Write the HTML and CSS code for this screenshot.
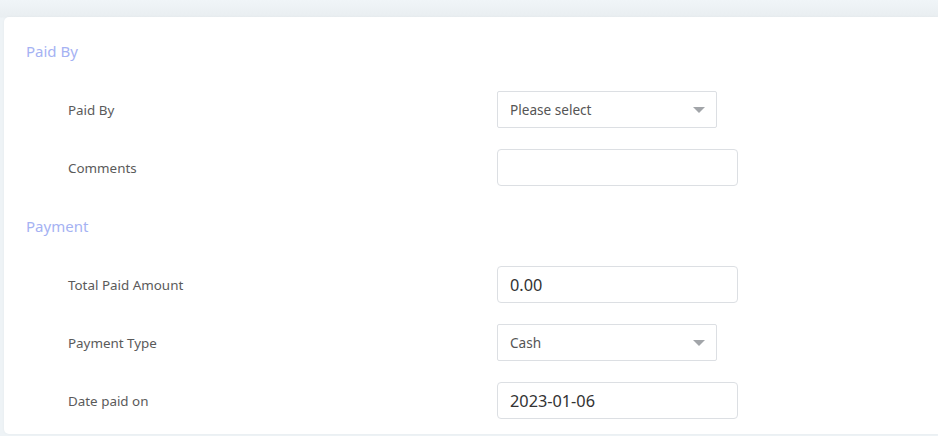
FILE: index.html
```html
<!DOCTYPE html>
<html>
<head>
<meta charset="utf-8">
<link rel="stylesheet" href="styles.css">
</head>
<body>
<div class="card">
  <div class="section-title">Paid By</div>
  <div class="row">
    <div class="label">Paid By</div>
    <div class="select"><span>Please select</span><i class="caret"></i></div>
  </div>
  <div class="row">
    <div class="label">Comments</div>
    <div class="input"></div>
  </div>
  <div class="section-title">Payment</div>
  <div class="row">
    <div class="label">Total Paid Amount</div>
    <div class="input value">0.00</div>
  </div>
  <div class="row">
    <div class="label">Payment Type</div>
    <div class="select"><span>Cash</span><i class="caret"></i></div>
  </div>
  <div class="row">
    <div class="label">Date paid on</div>
    <div class="input value">2023-01-06</div>
  </div>
</div>
</body>
</html>
```
FILE: styles.css
```css
html, body {
  margin: 0;
  padding: 0;
}
body {
  background: linear-gradient(#f0f5f8, #e9eef1 17px, #eef3f6 18px);
  font-family: "Noto Sans", "Open Sans", sans-serif;
  font-size: 13.4px;
  color: #555;
  height: 436px;
  overflow: hidden;
}
.card {
  margin: 17px 0 0 4px;
  background: #fff;
  border-radius: 5px 0 0 5px;
  box-shadow: 0 0 3px rgba(0,0,0,0.04);
  padding: 24px 0 15px 22px;
  display: flex;
  flex-direction: column;
  gap: 21px;
}
.section-title {
  color: #a5b2f3;
  font-size: 15px;
  line-height: 20px;
  height: 20px;
  margin-bottom: 9px;
}
.row + .section-title {
  margin-top: 9px;
}
.row {
  display: flex;
  align-items: center;
  height: 37px;
  padding-left: 42px;
}
.label {
  width: 429px;
  color: #5a5a5a;
}
.select, .input {
  box-sizing: border-box;
  height: 37px;
  border: 1px solid #dcdfe3;
  display: flex;
  align-items: center;
  padding: 0 12px;
}
.select {
  width: 220px;
  border-radius: 2px;
  justify-content: space-between;
  color: #555;
  font-size: 13.6px;
}
.input {
  width: 241px;
  border-radius: 4px;
}
.input.value {
  font-size: 16.3px;
  color: #333;
}
.caret {
  width: 0;
  height: 0;
  border-left: 6px solid transparent;
  border-right: 6px solid transparent;
  border-top: 6px solid #a2a5a9;
  margin-right: -1px;
}
```
